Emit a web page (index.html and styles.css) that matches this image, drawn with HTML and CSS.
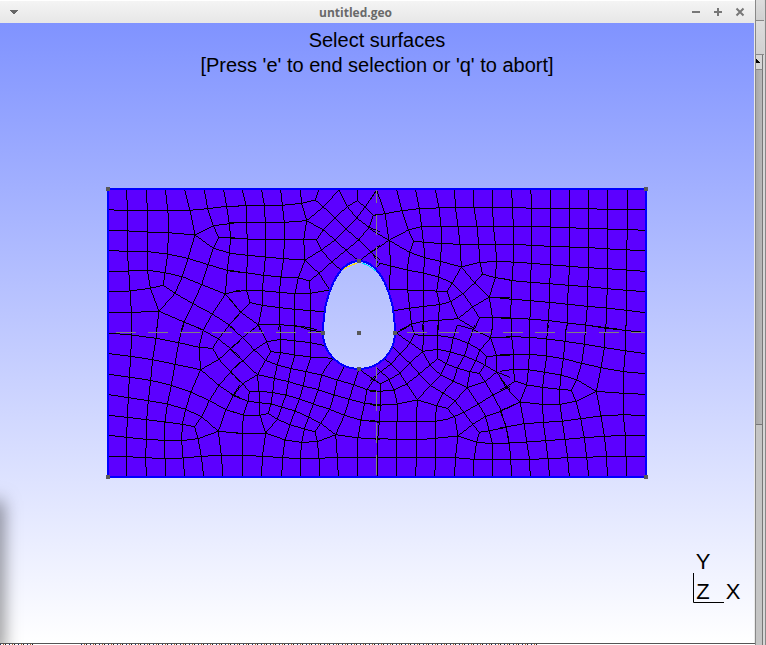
FILE: index.html
```html
<!DOCTYPE html>
<html lang="en">
<head>
<meta charset="utf-8">
<title>untitled.geo</title>
<link rel="stylesheet" href="styles.css">
</head>
<body>
<main class="window">
  <header class="titlebar">
    <button class="tool" type="button" aria-label="Window menu"><svg width="12" height="12"><path class="solid" d="M2 4h8v1h-1v1h-1v1h-1v1h-2v-1h-1v-1h-1v-1h-1z"/></svg></button>
    <h1 class="title">untitled.geo</h1>
    <div class="tools">
      <button class="tool" type="button" aria-label="Minimize"><svg width="12" height="12"><path class="sign" d="M2 6h8"/></svg></button>
      <button class="tool" type="button" aria-label="Maximize"><svg width="12" height="12"><path class="sign" d="M2 6h8M6 2v8"/></svg></button>
      <button class="tool" type="button" aria-label="Close"><svg width="12" height="12"><path class="sign" d="M2.500 2.500l7 7M9.500 2.500l-7 7"/></svg></button>
    </div>
  </header>
  <section class="canvas">
    <p class="prompt">Select surfaces<br>[Press 'e' to end selection or 'q' to abort]</p>
    <svg class="mesh" width="542" height="294" viewBox="106 186 542 294" role="img" aria-label="Surface mesh">
      <path class="surface" fill-rule="evenodd" d="M108 189H646V477H108ZM323 333A36 72 0 0 1 395 333A36 36 0 0 1 323 333Z"/>
      <g class="edges">
        <path transform="translate(100 180) scale(.333333)" d="M27 88L48 91L270 91L323 86L380 79L420 78M27 151L87 153L110 155L204 158L285 165L340 137L388 131L420 126M285 165L340 205L388 219L420 224M340 137L356 172L340 205M356 172L392 173L420 175M27 211L84 215L145 215L202 222L264 235L324 254L382 271L420 275M27 274L86 273L145 271L195 278L247 290L305 314L376 342L420 330M27 334L90 333L150 325L190 316L225 340L279 371L337 402L388 435L405 450M27 397L95 397L177 394L252 426L310 450M80 30L82 90L82 215L88 300L94 395L95 450M139 30L142 90L142 271L151 325L177 394L173 425L170 450M196 30L204 95L205 158L203 222L195 278L190 316M254 30L270 91L285 165L264 235L247 290L225 340L177 394M313 30L323 86L340 137M340 205L324 254L305 314L279 371L252 426L247 450M371 30L380 79L388 131L392 173L388 219L382 271L376 342L337 402L310 450M376 342L420 395M388 435L420 398"/>
        <path transform="translate(230 180) scale(.333333)" d="M0 79L48 77L103 76L157 76L215 70L256 60L266 30M256 60L280 81L315 113L348 147L386 180L423 216L450 240M0 129L50 128L106 128L163 127L230 122L280 81L327 30L352 80L380 114L417 142L450 155M280 150L315 113L352 80L382 62L382 30M382 62L405 81L430 106L450 102M348 147L380 114L405 81L440 32M230 122L280 150L315 180L348 211L387 243M430 106L417 142L386 180L348 211L305 246L267 280L238 303L241 340L241 450M0 176L48 177L105 178L163 180L260 180L280 150M260 180L274 210L305 246L335 272M225 240L274 210L315 180L348 147M387 243L423 216L450 195M0 220L53 226L105 231L161 236L225 240L267 280L299 330M0 274L48 278L101 286L153 291L205 293L238 303M0 337L48 331L95 332L148 337L195 341L241 340L299 330M0 357L32 396L85 435L148 434L193 437L240 443L262 450M50 331L60 368L33 397L0 433M60 368L97 376L148 383L197 388L241 392L283 395M37 30L48 77L50 128L53 226L50 280L50 331M95 30L103 76L106 128L106 231L101 286L97 332L97 376L85 435L90 450M85 435L70 450M152 30L157 76L163 127L163 180L161 236L153 291L148 337L148 434L146 450M211 30L215 70L230 122L221 180L225 240L205 293L195 341L194 437L195 450"/>
        <path transform="translate(370 180) scale(.333333)" d="M0 58L20 30L45 101L57 181L62 256L57 330M10 106L45 101L96 92L148 86L200 84L420 82M10 106L0 134M0 147L57 181L5 216L25 250M57 181L115 150L155 140L420 139M115 150L131 184L119 217L113 261L113 330L124 430L128 450M131 184L190 189L270 193L420 193M57 181L119 217L163 233L212 244L274 261L330 247L420 243M20 262L30 250L62 258L110 270L160 279L206 291L247 309L279 341L308 381L328 414L420 414M80 30L96 92L115 150M137 30L148 86L155 140L165 233L160 279L162 345L160 424L157 450M196 30L207 84L213 140L214 190L212 244L206 291L200 333L208 370L205 450M254 30L256 82L264 139L270 193L274 261L247 309L231 334L242 365L264 416L314 446L328 414M310 30L312 82L321 139L326 193L330 247L337 282L376 293L420 299M367 30L368 82L370 139L377 200L380 243L376 293L358 351L367 412L368 450M274 261L314 309L358 351L420 354M337 282L314 309L279 341L242 365L208 374L163 379L115 385L72 392M57 330L113 330L160 331L231 335M358 351L308 381L264 416L205 421L160 424L124 432L90 450"/>
        <path transform="translate(500 180) scale(.333333)" d="M34 30L38 80L40 150L40 245L36 300L34 350L32 400L35 450M91 30L94 50L94 250L91 310L91 390L88 450M151 30L151 285L148 310L148 370L145 420L142 450M208 30L208 270L205 320L202 375L202 430L199 450M265 30L265 290L262 320L262 380L256 450M322 30L322 330L319 380L319 425L316 450M382 30L382 165L379 210L379 430L376 450M0 82L72 84L280 86L300 88L435 88M0 139L128 140L228 144L318 147L403 149L435 152M0 193L78 195L148 199L268 203L328 207L388 210L435 212M0 244L66 248L158 255L248 262L335 267L435 274M0 295L37 302L91 307L148 311L205 316L262 320L322 326L379 331L435 335M0 355L65 360L148 367L205 373L262 379L319 384L379 391L435 398M0 414L72 416L148 422L202 429L256 435L319 443L365 449"/>
        <path transform="translate(100 325) scale(.333333)" d="M27 24L95 30L168 40L236 53L297 67L338 70L355 42L388 0M27 86L92 94L158 104L225 118L302 134L357 103L392 71L420 48M27 148L90 157L152 166L214 181L273 201L328 227L378 254L420 267M27 209L85 218L145 227L202 237L257 253L305 275L355 319L420 325M27 271L82 277L140 284L195 291L247 298L284 305M27 331L80 337L137 343L193 346L246 347L294 341L355 319M27 394L80 395L137 398L195 401L247 399L304 394L364 391L420 392M95 0L95 30L92 94L88 157L85 218L82 277L80 337L80 455M172 0L168 40L158 104L152 166L145 227L140 284L139 343L137 398L139 455M248 0L236 53L225 118L214 181L202 237L195 291L193 346L195 401L197 455M310 15L297 67L302 134L273 201L257 253L247 298L245 347L249 400L254 455M275 0L310 16L355 42L392 71L420 96M338 70L357 103L392 141L420 170M302 134L357 181L400 210L420 217M420 110L392 141L357 181L328 227L305 275L284 305L294 341L304 394L311 455M420 180L400 210L378 254L355 319L364 391L369 455"/>
        <path transform="translate(230 325) scale(.333333)" d="M0 5L38 38L73 75L107 106L142 120L183 131L228 140L275 150L322 165L371 179L411 194L450 200M0 72L38 38L85 0L110 50L122 80L107 106L82 149L38 176L10 212L0 232M0 72L38 108L82 149L133 160L175 170L220 183L265 194L312 210L358 223L404 235L450 239M0 140L38 108L73 75L110 50L152 43L190 47L240 53L285 62M0 140L38 176L58 200L87 198L128 203L168 210L208 222L250 237L299 253L343 271L393 285L450 292M122 80L152 83L195 90L243 96L310 100M0 205L10 212L54 229L87 233L123 237L155 246L195 258L236 276L272 295L317 329L380 338L450 343M58 200L54 229L40 270L37 325L37 455M0 258L40 270L90 271L115 265L142 283L180 299L223 312L255 320M0 322L37 325L107 324L165 345L215 352L262 350L317 329M0 392L40 391L97 394L158 398L210 401L267 400L325 397L450 398M82 149L87 198L88 235L90 271L107 324L97 394L95 455M150 0L152 83L142 120L133 160L128 203L123 237L115 265M192 0L195 47L195 90L183 131L175 170L168 210L155 246L142 283L107 324M243 0L243 96L228 140L220 183L208 222L195 258L180 299L165 345L158 398L155 455M310 100L290 125L275 150L265 194L250 237L236 276L223 312L215 352L211 400L211 455M345 122L322 165L312 210L299 253L272 295L255 320L262 350L267 400L269 455M387 132L371 179L358 223L343 271L317 329L322 397L325 455M387 132L411 150L451 176M450 140L428 168L411 194L404 235L393 285L384 338L382 455M165 0L210 5L230 12L278 22"/>
        <path transform="translate(370 325) scale(.333333)" d="M43 100L63 117L90 145L110 177L142 225L181 181L212 150L229 116L241 81L250 38L262 0M67 65L90 87L120 115L148 147L181 181L219 204L255 228L282 262L308 298L328 322M78 24L120 52L157 79L180 120L212 150L250 168L291 188L345 170L381 141M120 2L78 24M125 0L133 28L157 32L205 32L250 38L295 55L330 75L349 95M0 167L32 140L63 117L90 87L120 55L133 28M18 127L32 140L55 160L72 195L82 237L80 343L79 455M31 176L55 165L90 145L120 115L157 79L203 73L241 81L283 93L326 110L380 141L420 157M0 158L31 176L31 242L28 290L23 343L22 455M0 199L40 198L72 195L110 177L148 147L180 120L203 101L229 116L262 130L300 140L328 145M0 239L20 241L82 237L142 225L200 242L232 250L255 279L264 333M203 101L203 0M162 0L162 32L157 79M264 0L305 12L362 38L420 37M314 0L295 55L283 93L262 130L250 168L219 204L200 242L195 290L197 397L194 455M362 38L330 75L318 105L300 140L291 188L255 228L232 250M362 38L380 92L381 141L400 170L420 194M349 95L380 92L420 91M349 95L345 120L328 145L345 170L369 210L390 250L408 305L417 355M291 188L308 212L325 237L345 270L358 318L367 355L367 455M282 262L325 237L369 210L420 184M264 333L308 298L345 275L390 260L450 231M328 322L360 317L410 307M328 322L320 352L312 402L310 455M0 287L28 289L120 290L195 289L232 283L282 262M0 340L80 343L175 342L205 339L264 333L320 352L367 356L420 355M264 333L256 400L254 455M0 397L256 398L312 403L420 403M142 225L139 290L139 397L137 455M368 0L362 38"/>
        <path transform="translate(500 325) scale(.333333)" d="M0 37L35 35L90 37L142 42L195 49L255 58L313 68L375 77L435 86M0 90L35 88L90 88L140 93L190 101L245 115L303 128L370 140L435 146M0 139L40 133L85 134L135 142L183 150L230 164L289 199L370 205L435 208M0 195L18 187L45 168L80 180L128 187L180 193L214 196M0 157L18 187L60 231L128 238L180 238L228 229L289 199M0 258L18 303L28 355L32 403L35 455M0 258L60 231L72 295L80 350L88 400L91 455M0 309L18 306L72 296L130 292L185 289L242 281L303 273L370 269L435 272M0 355L28 354L82 351L137 347L195 343L253 338L313 334L376 331L435 331M0 404L90 403L145 401L205 398L320 395L435 394M34 0L35 35L40 80L40 133L45 168M88 0L88 88L85 134L80 180L60 231M145 0L140 42L140 93L133 142L128 187L128 238L130 292L137 347L144 401L149 455M199 0L195 49L190 101L183 150L179 193L180 238L187 289L195 343L203 398L208 455M257 0L253 58L245 115L230 164L214 196L228 229L242 281L253 338L260 396L266 455M316 0L313 68L303 128L289 199L303 273L313 334L320 395L322 455M376 0L376 77L371 140L370 269L376 331L378 395L380 455M256 0L313 9L412 20L435 22"/>
      </g>
      <path class="guide" d="M116 332.500h20m12 0h20m12 0h20m12 0h20m12 0h20m12 0h20m12 0h15M407 332.500h20m12 0h20m12 0h20m12 0h20m12 0h20m12 0h20m12 0h20m12 0h14M376.500 190v13m0 12v20m0 12v20M376.500 367v12m0 12v20m0 12v20m0 12v20"/>
      <path class="outline" d="M108 189H646V477H108ZM323 333A36 72 0 0 1 395 333A36 36 0 0 1 323 333Z"/>
      <path class="glint-warm" d="M343 270l4-3 5-2 5-2"/>
      <path class="glint-cool" d="M362 263l5 2 5 3 4 3"/>
      <path class="node" d="M106 187h4v4h-4zM644 187h4v4h-4zM106 475h4v4h-4zM644 475h4v4h-4zM357 331h4v4h-4zM357 259h4v4h-4zM357 367h4v4h-4zM321 331h4v4h-4zM393 331h4v4h-4z"/>
    </svg>
    <svg class="axes" width="52" height="58" viewBox="690 548 52 58" role="img" aria-label="Axes">
      <path d="M693.500 573v29.500h30.500"/>
      <text x="703" y="569" text-anchor="middle">Y</text>
      <text x="703" y="599" text-anchor="middle">Z</text>
      <text x="733" y="599" text-anchor="middle">X</text>
    </svg>
    <div class="shade"></div>
  </section>
  <div class="behind"></div>
</main>
<aside class="backdrop">
  <div class="band"></div>
  <div class="band tall"></div>
  <div class="stepper"><svg width="6" height="12"><path d="M0 4h1v1h1v1h1v1h1v1h-4z"/></svg></div>
  <div class="thumb"></div>
  <div class="trough"></div>
</aside>
</body>
</html>
```
FILE: styles.css
```css
* {
  box-sizing: border-box;
}

body {
  margin: 0;
  min-height: 100vh;
  display: grid;
  grid-template-columns: minmax(0, 1fr) 10px;
  overflow: hidden;
  background: #d6d6d6;
}

.window {
  display: flex;
  flex-direction: column;
  border-right: 1px solid #888;
}

.titlebar {
  height: 23px;
  display: grid;
  grid-template-columns: 24px 1fr 68px;
  align-items: center;
  padding: 0 8px;
  border-top: 1px solid #fff;
  background: linear-gradient(#f4f4f4, #e7e7e7);
}

.title {
  margin: 0;
  padding-top: 2px;
  font: bold 12px/20px "Open Sans", "Noto Sans", sans-serif;
  color: #696969;
  text-align: center;
}

.tools {
  display: flex;
  justify-content: flex-end;
  gap: 10px;
  padding-right: 1px;
}

.tool {
  width: 12px;
  height: 12px;
  padding: 0;
  border: 0;
  background: none;
}

.tool svg {
  display: block;
}

.solid {
  fill: #666;
}

.sign {
  fill: none;
  stroke: #777;
  stroke-width: 2;
}

.canvas {
  flex: 1;
  position: relative;
  overflow: hidden;
  display: flex;
  flex-direction: column;
  align-items: center;
  padding: 5px 0 37px;
  border-right: 1px solid #e9e9e9;
  background: linear-gradient(#8093ff, #fff);
}

.prompt {
  margin: 0 0 108px;
  font: 20px/25px "Liberation Sans", sans-serif;
  color: #000;
  text-align: center;
  white-space: nowrap;
}

.mesh {
  flex: none;
  display: block;
}

.surface {
  fill: #5c00ff;
}

.edges {
  fill: none;
  stroke: #000;
  stroke-width: 3;
  shape-rendering: crispEdges;
}

.guide {
  fill: none;
  stroke: #808080;
  shape-rendering: crispEdges;
}

.outline {
  fill: none;
  stroke: #00f;
  stroke-width: 2;
  shape-rendering: crispEdges;
}

.glint-warm {
  fill: none;
  stroke: #ffe000;
  shape-rendering: crispEdges;
}

.glint-cool {
  fill: none;
  stroke: #00d8ff;
  shape-rendering: crispEdges;
}

.node {
  fill: #595959;
}

.axes {
  margin: auto 12px 0 auto;
  flex: none;
  font: 22px "Liberation Sans", sans-serif;
}

.axes path {
  fill: none;
  stroke: #000;
}

.shade {
  position: absolute;
  left: -10px;
  bottom: -10px;
  width: 10px;
  height: 150px;
  box-shadow: 0 0 18px 2px rgba(0, 0, 0, .55);
}

.behind {
  height: 2px;
  border-top: 1px solid #555;
  background: linear-gradient(90deg, transparent 33px, #fff 33px, #fff 80px, transparent 80px, transparent 540px, #fff 540px), repeating-linear-gradient(90deg, #236 0 1px, #fff 1px 3px, #a63 3px 4px, #fff 4px 5px, #222 5px 6px, #fff 6px 9px);
}

.backdrop {
  display: flex;
  flex-direction: column;
  border-right: 1px solid #888;
  background: #d6d6d6;
}

.band {
  height: 21px;
  margin-right: 1px;
  border-bottom: 1px solid #888;
  background: linear-gradient(#ddd, #d0d0d0);
}

.tall {
  height: 34px;
}

.stepper,
.thumb,
.trough {
  margin-right: 2px;
  border-right: 1px solid #777;
}

.stepper {
  height: 15px;
  border-bottom: 1px solid #888;
}

.stepper svg {
  display: block;
}

.thumb {
  height: 355px;
  border-bottom: 1px solid #777;
  background: linear-gradient(90deg, #a8a8a8, #b8b8b8);
}

.trough {
  flex: 1;
  background: #c5c5c5;
}
```
